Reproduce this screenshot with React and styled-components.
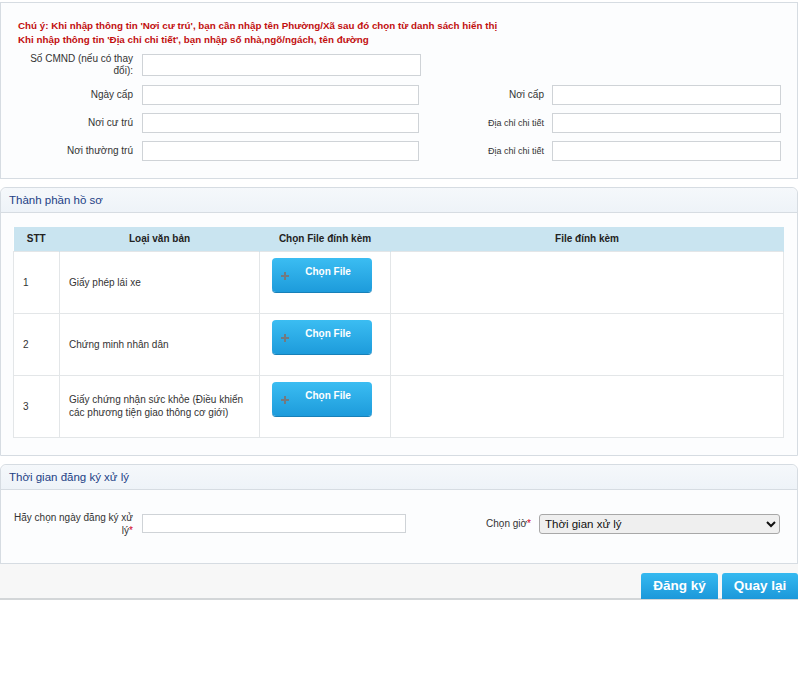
import styled, { createGlobalStyle } from "styled-components";

const GlobalStyle = createGlobalStyle`
  html, body {
    margin: 0;
    padding: 0;
    background: #ffffff;
    font-family: "Liberation Sans", Arial, sans-serif;
    font-size: 10px;
    color: #333;
  }
  * { box-sizing: border-box; }
`;

const Page = styled.div`
  width: 798px;
  padding-top: 2px;
  display: flex;
  flex-direction: column;
  gap: 8px;
`;

const Panel = styled.section`
  background: #fcfdfe;
  border: 1px solid #d6dce2;
  border-radius: ${(p) => (p.$rounded ? "6px 6px 0 0" : "0")};
  padding-bottom: ${(p) => p.$pb || 0}px;
`;

const PanelHeader = styled.div`
  height: 25px;
  display: flex;
  align-items: center;
  padding-left: 8px;
  font-size: 11.5px;
  color: #233f85;
  background: linear-gradient(#f5f8fb, #eef3f8);
  border-bottom: 1px solid #d6dce2;
  border-radius: 6px 6px 0 0;
`;

const Notice = styled.div`
  padding: 16px 0 0 17px;
  font-weight: bold;
  font-size: 9.8px;
  line-height: 14px;
  color: #c20f0f;
`;

const FormGrid = styled.div`
  display: grid;
  grid-template-columns: ${(p) => p.$cols || "141px 279px 131px 229px"};
  row-gap: 8px;
  align-items: center;
  padding-top: ${(p) => p.$pt || 0}px;
`;

const Label = styled.label`
  text-align: right;
  padding-right: ${(p) => (p.$right ? 8 : 9)}px;
  padding-left: 12px;
  font-size: ${(p) => (p.$small ? 9 : 10)}px;
  line-height: ${(p) => (p.$tall ? 13 : 12)}px;
  color: #333;
`;

const Star = styled.span`
  color: #d0021b;
`;

const Input = styled.input`
  height: ${(p) => p.$h || 20}px;
  width: ${(p) => (p.$w ? `${p.$w}px` : "100%")};
  border: 1px solid #cfd3d7;
  background: #fff;
  font-family: inherit;
  font-size: 11px;
  padding: 0 4px;
`;

const Select = styled.select`
  height: 20px;
  width: 241px;
  border: 1px solid #a8a8a8;
  border-radius: 3px;
  background: #efefef;
  font-family: "Liberation Sans", Arial, sans-serif;
  font-size: 11.5px;
  color: #111;
  padding: 0 1px;
`;

const Table = styled.table`
  margin: 14px 0 0 12px;
  width: 771px;
  border-collapse: collapse;
  background: #fff;
`;

const Th = styled.th`
  height: 24px;
  background: #c9e4f0;
  font-size: 10px;
  font-weight: bold;
  color: #222;
  text-align: center;
  width: ${(p) => (p.$w ? `${p.$w}px` : "auto")};
  border-right: 1px solid #c9e4f0;
`;

const Td = styled.td`
  height: 62px;
  border: 1px solid #e3e6e8;
  padding: ${(p) => (p.$top ? "6px 0 0 12px" : "0 9px")};
  vertical-align: ${(p) => (p.$top ? "top" : "middle")};
  font-size: 10px;
  line-height: 13px;
  color: #333;
`;

const FileButton = styled.button`
  position: relative;
  width: 100px;
  height: 34px;
  border: none;
  border-radius: 4px;
  background: linear-gradient(#3bbdf2, #1d9bdb);
  box-shadow: 0 1px 0 #1780b8;
  color: #fff;
  font-family: "Liberation Sans", Arial, sans-serif;
  font-size: 10px;
  font-weight: bold;
  padding: 8px 0 0 12px;
  display: flex;
  justify-content: center;
  align-items: flex-start;
  cursor: pointer;
`;

const PlusIcon = styled.svg`
  position: absolute;
  left: 9px;
  top: 14px;
`;

const SubmitRow = styled.div`
  display: flex;
  justify-content: flex-end;
  gap: 4px;
  height: 37px;
  padding-top: 9px;
  background: #f7f7f7;
  border-top: 1px solid #d6dce2;
  border-bottom: 2px solid #d3d6d8;
  margin-top: -9px;
`;

const ActionButton = styled.button`
  height: 26px;
  width: ${(p) => p.$w}px;
  border: none;
  border-radius: 3px 3px 0 0;
  background: linear-gradient(#35b9f0, #1c98da);
  color: #fff;
  font-family: "Liberation Sans", Arial, sans-serif;
  font-size: 13.5px;
  font-weight: bold;
  cursor: pointer;
`;

const docs = [
  { stt: 1, name: "Giấy phép lái xe" },
  { stt: 2, name: "Chứng minh nhân dân" },
  {
    stt: 3,
    name: "Giấy chứng nhận sức khỏe (Điều khiển các phương tiện giao thông cơ giới)",
  },
];

const App = () => {
  return (
    <>
      <GlobalStyle />
      <Page>
        <Panel $pb={17}>
          <Notice>
            Chú ý: Khi nhập thông tin 'Nơi cư trú', bạn cần nhập tên Phường/Xã sau đó chọn từ danh sách hiển thị
            <br />
            Khi nhập thông tin 'Địa chỉ chi tiết', bạn nhập số nhà,ngõ/ngách, tên đường
          </Notice>
          <FormGrid $pt={6}>
            <Label>Số CMND (nếu có thay đổi):</Label>
            <Input $h={22} />
            <span />
            <span />

            <Label>Ngày cấp</Label>
            <Input $w={277} />
            <Label $right>Nơi cấp</Label>
            <Input />

            <Label>Nơi cư trú</Label>
            <Input $w={277} />
            <Label $right $small>Địa chỉ chi tiết</Label>
            <Input />

            <Label>Nơi thường trú</Label>
            <Input $w={277} />
            <Label $right $small>Địa chỉ chi tiết</Label>
            <Input />
          </FormGrid>
        </Panel>

        <Panel $rounded $pb={17}>
          <PanelHeader>Thành phần hồ sơ</PanelHeader>
          <Table>
            <thead>
              <tr>
                <Th $w={46}>STT</Th>
                <Th $w={200}>Loại văn bản</Th>
                <Th $w={131}>Chọn File đính kèm</Th>
                <Th>File đính kèm</Th>
              </tr>
            </thead>
            <tbody>
              {docs.map((d) => (
                <tr key={d.stt}>
                  <Td>{d.stt}</Td>
                  <Td>{d.name}</Td>
                  <Td $top>
                    <FileButton>
                      <PlusIcon width="8" height="8" viewBox="0 0 8 8">
                        <path d="M3 0h2v3h3v2H5v3H3V5H0V3h3z" fill="#737a80" />
                      </PlusIcon>
                      Chọn File
                    </FileButton>
                  </Td>
                  <Td />
                </tr>
              ))}
            </tbody>
          </Table>
        </Panel>

        <div>
          <Panel $rounded $pb={34}>
            <PanelHeader>Thời gian đăng ký xử lý</PanelHeader>
            <FormGrid $pt={21} $cols="141px 264px 133px 241px">
              <Label $tall>
                Hãy chọn ngày đăng ký xử lý<Star>*</Star>
              </Label>
              <Input $h={19} />
              <Label $right>
                Chọn giờ<Star>*</Star>
              </Label>
              <Select defaultValue="">
                <option value="">Thời gian xử lý</option>
              </Select>
            </FormGrid>
          </Panel>
          <SubmitRow>
            <ActionButton $w={77}>Đăng ký</ActionButton>
            <ActionButton $w={76}>Quay lại</ActionButton>
          </SubmitRow>
        </div>
      </Page>
    </>
  );
};

export default App;
